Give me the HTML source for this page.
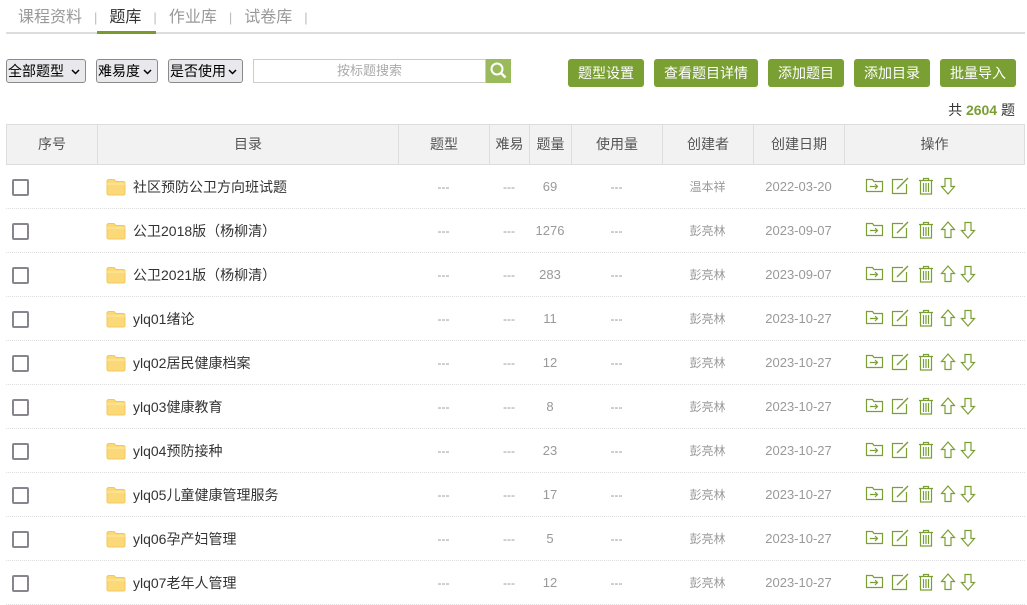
<!DOCTYPE html>
<html><head><meta charset="utf-8">
<style>
*{box-sizing:border-box;margin:0;padding:0}
body{width:1027px;height:599px;overflow:hidden;background:#fff;font-family:"Liberation Sans","Noto Sans CJK SC",sans-serif;position:relative;color:#333}
.abs{position:absolute}
.tabs{top:3px;left:18px;font-size:16px;color:#999;white-space:nowrap}
.tabs span{display:inline-block}
.sep{color:#bbb;margin:0 12px;font-size:13px}
.line{top:32px;left:6px;width:1019px;height:2px;background:#ddd}
.act{top:31px;left:97px;width:59px;height:3px;background:#7a9a2e}
.sel{top:59px;height:24px;border:1px solid #8a8a8a;border-radius:3px;background:#e9e9ed;font-size:14px;color:#000;line-height:22px;padding-left:1px;white-space:nowrap}
.sel svg{position:absolute;right:5px;top:9px}
.search{top:59px;left:253px;width:233px;height:24px;border:1px solid #ccc;font-size:13px;color:#aaa;text-align:center;line-height:22px}
.sbtn{top:59px;left:486px;width:25px;height:24px;background:#9abb5c}
.btn{top:59px;height:28px;background:#7a9f32;color:#fff;font-size:14px;line-height:28px;text-align:center;border-radius:3px}
.total{top:100px;right:12px;font-size:14px;color:#333}
.total b{color:#7a9f32}
.thead{top:124px;left:6px;width:1019px;height:41px;background:#f2f2f2;border:1px solid #ddd}
.th{position:absolute;top:0;height:39px;line-height:39px;text-align:center;font-size:14px;color:#555;border-right:1px solid #ddd}
.row{position:absolute;left:6px;width:1019px;height:44px;border-bottom:1px dotted #ddd}
.c{position:absolute;top:0;height:44px;line-height:44px;text-align:center;font-size:12px;color:#999}
.n{font-size:13px}
.cb{position:absolute;left:6px;top:14px;width:17px;height:17px;border:2px solid #88858f;border-radius:2px}
.fold{position:absolute;left:100px;top:13px}
.name{position:absolute;left:127px;top:0;line-height:44px;font-size:14px;color:#333}
.ops{position:absolute;left:859px;top:12px}
.ops svg{position:absolute;top:0}
</style></head><body>
<div class="abs tabs"><span>课程资料</span><span class="sep">|</span><span style="color:#333">题库</span><span class="sep">|</span><span>作业库</span><span class="sep">|</span><span>试卷库</span><span class="sep">|</span></div>
<div class="abs line"></div><div class="abs act"></div>

<div class="abs sel" style="left:6px;width:80px">全部题型<svg width="9" height="6"><path d="M1 1l3.5 3.5L8 1" stroke="#000" stroke-width="1.5" fill="none"/></svg></div>
<div class="abs sel" style="left:96px;width:62px">难易度<svg width="9" height="6"><path d="M1 1l3.5 3.5L8 1" stroke="#000" stroke-width="1.5" fill="none"/></svg></div>
<div class="abs sel" style="left:168px;width:75px">是否使用<svg width="9" height="6"><path d="M1 1l3.5 3.5L8 1" stroke="#000" stroke-width="1.5" fill="none"/></svg></div>
<div class="abs search">按标题搜索</div>
<div class="abs sbtn"><svg width="25" height="24"><circle cx="11" cy="10" r="5.5" stroke="#fff" stroke-width="2" fill="none"/><path d="M15 14l4.5 4.5" stroke="#fff" stroke-width="2.5"/></svg></div>

<div class="abs btn" style="left:568px;width:76px">题型设置</div>
<div class="abs btn" style="left:654px;width:104px">查看题目详情</div>
<div class="abs btn" style="left:768px;width:76px">添加题目</div>
<div class="abs btn" style="left:854px;width:76px">添加目录</div>
<div class="abs btn" style="left:940px;width:76px">批量导入</div>
<div class="abs total">共 <b>2604</b> 题</div>

<div class="abs thead">
<div class="th" style="left:0;width:91px">序号</div>
<div class="th" style="left:91px;width:301px">目录</div>
<div class="th" style="left:392px;width:91px">题型</div>
<div class="th" style="left:483px;width:40px">难易</div>
<div class="th" style="left:523px;width:42px">题量</div>
<div class="th" style="left:565px;width:91px">使用量</div>
<div class="th" style="left:656px;width:91px">创建者</div>
<div class="th" style="left:747px;width:91px">创建日期</div>
<div class="th" style="left:838px;width:179px;border-right:none">操作</div>
</div>

<div id="rows"></div>
<script>
var data=[["社区预防公卫方向班试题","69","温本祥","2022-03-20"],["公卫2018版（杨柳清）","1276","彭亮林","2023-09-07"],["公卫2021版（杨柳清）","283","彭亮林","2023-09-07"],["ylq01绪论","11","彭亮林","2023-10-27"],["ylq02居民健康档案","12","彭亮林","2023-10-27"],["ylq03健康教育","8","彭亮林","2023-10-27"],["ylq04预防接种","23","彭亮林","2023-10-27"],["ylq05儿童健康管理服务","17","彭亮林","2023-10-27"],["ylq06孕产妇管理","5","彭亮林","2023-10-27"],["ylq07老年人管理","12","彭亮林","2023-10-27"]];
var G="#7a9f32";
var folder='<svg width="19" height="16" style="left:0"><path d="M1.5 2.5h6l1.5 2h8.5v10h-16z" fill="none" stroke="'+G+'" stroke-width="1.2"/><path d="M5 9.5h7M10 7l2.5 2.5L10 12" fill="none" stroke="'+G+'" stroke-width="1.2"/></svg>';
var edit='<svg width="19" height="18" style="left:26px"><path d="M12 2.5H1.5v14h14V7" fill="none" stroke="'+G+'" stroke-width="1.2"/><path d="M6 12l11-11" stroke="'+G+'" stroke-width="1.4"/></svg>';
var trash='<svg width="16" height="18" style="left:53px"><path d="M1 3.5h14M5.5 3.5V1.5h5v2M2.5 3.5v13.5h11V3.5M5.5 6v9M8 6v9M10.5 6v9" fill="none" stroke="'+G+'" stroke-width="1.2"/></svg>';
function up(l){return '<svg width="16" height="18" style="left:'+l+'px"><path d="M8 1L1.5 8.5h3.5v8h6v-8h3.5z" fill="none" stroke="'+G+'" stroke-width="1.2"/></svg>';}
function dn(l){return '<svg width="16" height="18" style="left:'+l+'px"><path d="M8 17L1.5 9.5h3.5v-8h6v8h3.5z" fill="none" stroke="'+G+'" stroke-width="1.2"/></svg>';}
var fi='<svg width="20" height="18"><path d="M1 3.5q0-2 2-2h5l2 2h7q2 0 2 2V15q0 2-2 2H3q-2 0-2-2z" fill="#fbd978" stroke="#f3c85a" stroke-width="1"/><path d="M1 6h18" stroke="#fde9a8" stroke-width="1"/></svg>';
var h='';
data.forEach(function(d,i){
var t=165+i*44;
h+='<div class="row" style="top:'+t+'px"><div class="cb"></div><div class="fold">'+fi+'</div><div class="name">'+d[0]+'</div>'+
'<div class="c" style="left:392px;width:91px">---</div><div class="c" style="left:483px;width:40px">---</div><div class="c n" style="left:523px;width:42px">'+d[1]+'</div><div class="c" style="left:565px;width:91px">---</div><div class="c" style="left:656px;width:91px">'+d[2]+'</div><div class="c n" style="left:747px;width:91px">'+d[3]+'</div>'+
'<div class="ops">'+folder+edit+trash+(i==0?dn(75):up(75)+dn(95))+'</div></div>';
});
document.getElementById('rows').innerHTML=h;
</script>
</body></html>
